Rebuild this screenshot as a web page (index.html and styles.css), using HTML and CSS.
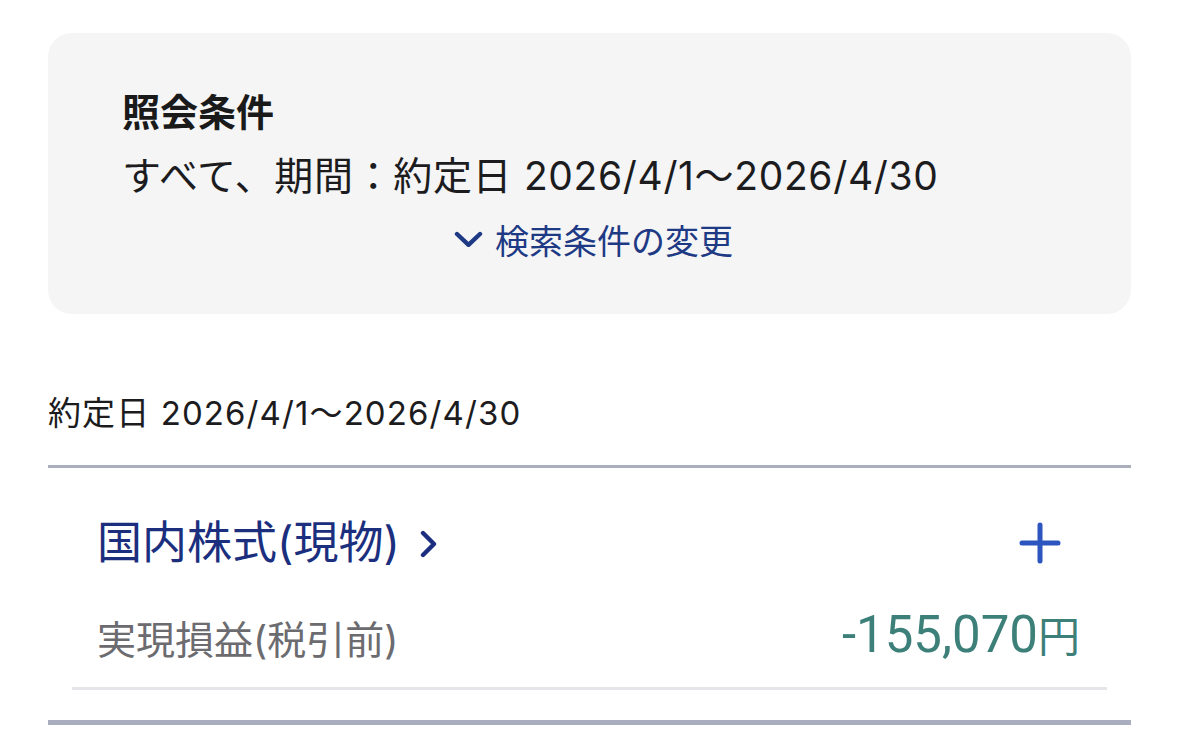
FILE: index.html
```html
<!DOCTYPE html>
<html lang="ja">
<head>
<meta charset="utf-8">
<link rel="stylesheet" href="styles.css">
</head>
<body>
<div class="page">
  <section class="card">
    <div class="card-title">照会条件</div>
    <div class="card-cond">すべて、期間：約定日 2026/4/1〜2026/4/30</div>
    <div class="card-link">
      <svg class="chev-down" width="29" height="17" viewBox="0 0 29 17"><polyline points="3,3 14.5,13.8 26,3" fill="none" stroke="#1f3a85" stroke-width="4.4" stroke-linecap="round" stroke-linejoin="round"/></svg>
      <span>検索条件の変更</span>
    </div>
  </section>

  <div class="period">約定日 2026/4/1〜2026/4/30</div>
  <div class="rule-thick"></div>

  <section class="group">
    <div class="group-head">
      <div class="group-title">
        <span>国内株式(現物)</span>
        <svg class="chev-right" width="18" height="28" viewBox="0 0 18 28"><polyline points="3,3 14,14 3,25" fill="none" stroke="#1b2f7e" stroke-width="4.4" stroke-linecap="round" stroke-linejoin="round"/></svg>
      </div>
      <svg class="plus" width="44" height="44" viewBox="0 0 44 44"><path d="M22 4 V40 M4 22 H40" fill="none" stroke="#2d55c0" stroke-width="5" stroke-linecap="round"/></svg>
    </div>
    <div class="group-row">
      <span class="label">実現損益(税引前)</span>
      <span class="amount"><span class="amount-num">-155,070</span><span class="amount-unit">円</span></span>
    </div>
    <div class="rule-thin"></div>
  </section>
  <div class="rule-bottom"></div>
</div>
</body>
</html>
```

FILE: styles.css
```css
html, body {
  margin: 0;
  padding: 0;
  background: #ffffff;
}
body {
  font-family: Inter, "Noto Sans CJK JP", sans-serif;
  color: #1c1c1e;
}
.page {
  padding: 33px 48px 0;
}
.card {
  background: #f5f5f6;
  border-radius: 24px;
  height: 281px;
  box-sizing: border-box;
  padding: 48px 74px 0;
}
.card-title {
  font-size: 38px;
  font-weight: 700;
  line-height: 63px;
  color: #1a1a1a;
}
.card-cond {
  font-size: 39px;
  line-height: 63px;
  letter-spacing: 0.65px;
  color: #1c1c1e;
}
.card-link {
  display: flex;
  justify-content: center;
  align-items: center;
  gap: 12px;
  height: 65px;
  padding-left: 8px;
  font-size: 34px;
  color: #1f3a85;
}
.chev-down {
  display: block;
}
.period {
  margin-top: 79px;
  font-size: 33px;
  line-height: 40px;
  letter-spacing: 1.1px;
  color: #1c1c1e;
}
.rule-thick {
  margin-top: 32px;
  height: 3px;
  background: #abaebb;
}
.group {
  padding: 0 24px;
}
.group-head {
  display: flex;
  justify-content: space-between;
  align-items: center;
  padding: 50px 25px 0;
  height: 50px;
}
.group-title {
  display: flex;
  align-items: center;
  gap: 20px;
  font-size: 45px;
  line-height: 50px;
  color: #1b2f7e;
}
.chev-right {
  display: block;
  margin-top: 2px;
}
.plus {
  display: block;
  margin-right: 20px;
}
.group-row {
  display: flex;
  justify-content: space-between;
  align-items: center;
  margin-top: 49px;
  padding: 0 27px 0 25px;
  height: 46px;
}
.label {
  font-size: 39px;
  line-height: 46px;
  color: #6b6b70;
}
.amount {
  line-height: 46px;
  color: #3d807a;
}
.amount-num {
  font-family: Roboto, "Noto Sans CJK JP", sans-serif;
  font-size: 51px;
}
.amount-unit {
  font-size: 42px;
}
.rule-thin {
  margin-top: 24px;
  height: 3px;
  background: #e6e6ea;
}
.rule-bottom {
  margin-top: 30px;
  height: 5px;
  background: #a9aebf;
}
```
